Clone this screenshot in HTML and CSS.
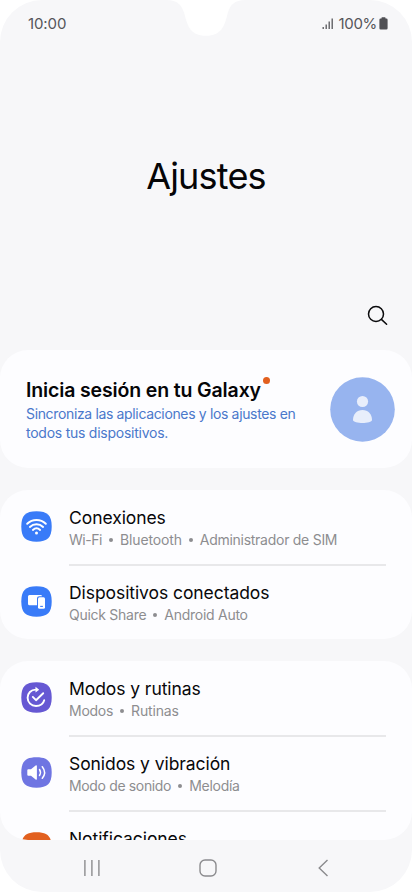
FILE: index.html
```
<!DOCTYPE html>
<html lang="es">
<head>
<meta charset="utf-8">
<meta name="viewport" content="width=device-width, initial-scale=1">
<title>Ajustes</title>
<link rel="stylesheet" href="styles.css">
</head>
<body>
<div class="phone">
  <svg class="notch" width="80" height="37" viewBox="0 0 80 37"><path d="M0 0C12 0 15.500 5 18.500 14C21.500 26 24.500 35.800 40 35.800C55.500 35.800 58.500 26 61.500 14C64 5 68 0 80 0Z" fill="#fff"/></svg>
  <header class="status">
    <span class="time">10:00</span>
    <div class="status-right">
      <svg class="signal" width="12" height="12" viewBox="0 0 12 12" stroke="#55555a" stroke-width="1.300"><path d="M1.200 11V9M4.200 11V6.500M7.200 11V3.500M10.200 11V0.500"/></svg>
      <span class="percent">100%</span>
      <svg class="battery" width="9" height="13" viewBox="0 0 9 13"><path d="M2.500 1.500V.8Q2.500.2 3.100.2H5.900Q6.500.2 6.500.8V1.500H7.300Q8.600 1.500 8.600 2.800V11.200Q8.600 12.500 7.300 12.500H1.700Q.4 12.500.4 11.200V2.800Q.4 1.500 1.700 1.500Z" fill="#505054"/></svg>
    </div>
  </header>
  <h1 class="title">Ajustes</h1>
  <div class="toolbar">
    <svg width="22" height="22" viewBox="0 0 22 22" fill="none" stroke="#0a0a0c" stroke-width="1.500" stroke-linecap="round"><circle cx="9" cy="9" r="7.500"/><path d="M14.400 14.400L19.600 19.300"/></svg>
  </div>
  <main class="list">
    <section class="card account">
      <div class="account-text">
        <h2 class="account-title">Inicia sesión en tu Galaxy<i class="badge"></i></h2>
        <p class="account-sub">Sincroniza las aplicaciones y los ajustes en<br><span class="second-line">todos tus dispositivos.</span></p>
      </div>
      <svg class="avatar" width="65" height="65" viewBox="0 0 65 65"><circle cx="32.500" cy="32.500" r="32.300" fill="#97b4ef"/><g fill="#e8eefb"><circle cx="32.500" cy="24.500" r="5.600"/><path d="M23 43C23 37 27 33 32.500 33S42 37 42 43C42 45 37 46 32.500 46S23 45 23 43Z"/></g></svg>
    </section>
    <section class="card">
      <div class="row">
        <svg class="icon" viewBox="0 0 31 31"><path class="blue" d="M15.500.3C26.500.3 30.700 4.500 30.700 15.500S26.500 30.700 15.500 30.700.3 26.500.3 15.500 4.500.3 15.500.3Z"/><g fill="none" stroke="#fff" stroke-width="2" stroke-linecap="round"><path d="M6.200 12.700C11.500 7.700 19.500 7.700 24.800 12.700M8.900 15.900C12.700 12.400 18.300 12.400 22.100 15.900M11.900 18.900C14 17 17 17 19.100 18.900"/></g><circle cx="15.500" cy="21.900" r="1.500" fill="#fff"/></svg>
        <div class="text"><span class="name">Conexiones</span><p class="sub"><span class="tighter">Wi-Fi</span><i></i><span class="looser">Bluetooth</span><i></i><span>Administrador de SIM</span></p></div>
      </div>
      <div class="row">
        <svg class="icon" viewBox="0 0 31 31"><path class="blue" d="M15.500.3C26.500.3 30.700 4.500 30.700 15.500S26.500 30.700 15.500 30.700.3 26.500.3 15.500 4.500.3 15.500.3Z"/><path d="M8.500 9H19.500Q21 9 21 10.200H18.200Q16 10.200 16 12.200V19.200H8.500Q7 19.200 7 17.700V10.500Q7 9 8.500 9Z" fill="#fff"/><rect x="17" y="11.200" width="7" height="11.500" rx="1.500" fill="#fff"/><path d="M19.200 20.400H21.900" stroke="#397bf8" stroke-width="1.100"/></svg>
        <div class="text"><span class="name">Dispositivos conectados</span><p class="sub"><span>Quick Share</span><i></i><span>Android Auto</span></p></div>
      </div>
    </section>
    <section class="card clipped">
      <div class="row">
        <svg class="icon" viewBox="0 0 31 31"><path class="violet" d="M15.500.3C26.500.3 30.700 4.500 30.700 15.500S26.500 30.700 15.500 30.700.3 26.500.3 15.500 4.500.3 15.500.3Z"/><g fill="none" stroke="#fff" stroke-width="1.900" stroke-linecap="round" stroke-linejoin="round"><path d="M14.600 7.600C10 7.600 6.600 11.200 6.600 15.800S10.300 24 15 24C19 24 22.300 21.600 23.200 18.200M11.800 14.900L15 18.200L22.200 11.200"/></g><path d="M14.500 4.800L18.200 7.700L14.500 10.500Z" fill="#fff"/></svg>
        <div class="text"><span class="name">Modos y rutinas</span><p class="sub"><span>Modos</span><i></i><span class="looser">Rutinas</span></p></div>
      </div>
      <div class="row">
        <svg class="icon" viewBox="0 0 31 31"><path class="indigo" d="M15.500.3C26.500.3 30.700 4.500 30.700 15.500S26.500 30.700 15.500 30.700.3 26.500.3 15.500 4.500.3 15.500.3Z"/><path d="M7.300 12.200H10L14.600 8.500Q15.900 7.700 15.900 9.200V21.800Q15.900 23.300 14.600 22.400L10 18.800H7.300Q6.300 18.800 6.300 17.800V13.200Q6.300 12.200 7.300 12.200Z" fill="#fff"/><path d="M18.500 12.500Q20.500 15.500 18.500 18.500M21.300 9.700Q25.900 15.500 21.300 21.300" fill="none" stroke="#fff" stroke-width="1.500" stroke-linecap="round"/></svg>
        <div class="text"><span class="name">Sonidos y vibración</span><p class="sub"><span class="tight">Modo de sonido</span><i></i><span>Melodía</span></p></div>
      </div>
      <div class="row">
        <svg class="icon" viewBox="0 0 31 31"><path class="orange" d="M15.500.3C26.500.3 30.700 4.500 30.700 15.500S26.500 30.700 15.500 30.700.3 26.500.3 15.500 4.500.3 15.500.3Z"/></svg>
        <div class="text"><span class="name">Notificaciones</span></div>
      </div>
    </section>
  </main>
  <nav class="nav">
    <svg width="18" height="18" viewBox="0 0 18 18" stroke="#8b8b8e" stroke-width="1.400"><path d="M1.900 1V17M8.900 1V17M15.900 1V17"/></svg>
    <svg width="18" height="18" viewBox="0 0 18 18" fill="none" stroke="#8b8b8e" stroke-width="1.400"><rect x="1" y="1" width="16" height="16" rx="5"/></svg>
    <svg width="18" height="18" viewBox="0 0 18 18" fill="none" stroke="#8b8b8e" stroke-width="1.400"><path d="M12.500 1L4.200 9L12.500 17"/></svg>
  </nav>
</div>
</body>
</html>
```
FILE: styles.css
```
* { box-sizing: border-box; }
body { margin: 0; background: #fff; font-family: Inter, "Liberation Sans", sans-serif; }
h1, h2, p { margin: 0; font-weight: 400; }
svg { display: block; flex: none; }

.phone {
  position: relative;
  width: 412px;
  height: 892px;
  overflow: hidden;
  display: flex;
  flex-direction: column;
  background: #f7f7f9;
  border-radius: 42px;
}
.notch { position: absolute; left: 166px; top: 0; }

.status {
  display: flex;
  justify-content: space-between;
  align-items: center;
  height: 47px;
  padding: 0 24px 0 28px;
  font-size: 15px;
  color: #55555a;
}
.status-right { display: flex; align-items: center; }
.percent { margin: 0 2px 0 4px; letter-spacing: -0.3px; }
.time { letter-spacing: -0.1px; }

.title {
  height: 258px;
  padding-top: 107px;
  font-size: 36px;
  line-height: 44px;
  letter-spacing: -0.8px;
  text-align: center;
  color: #050507;
}
.toolbar { display: flex; justify-content: flex-end; height: 45px; padding-right: 23px; }

.list { display: flex; flex-direction: column; gap: 22px; }
.card { background: #fdfdff; border-radius: 28px; }

.account {
  display: flex;
  align-items: center;
  justify-content: space-between;
  height: 118px;
  padding: 0 17px 0 26px;
}
.account-text { white-space: nowrap; }
.account-title {
  position: relative;
  top: 1px;
  width: max-content;
  font-size: 19.500px;
  line-height: 24px;
  font-weight: 600;
  letter-spacing: -0.14px;
  color: #050507;
}
.badge { position: absolute; right: -9px; top: -1px; width: 7px; height: 7px; border-radius: 50%; background: #e2601f; }
.account-sub { margin-top: 3px; font-size: 14px; line-height: 19px; letter-spacing: -0.35px; color: #4a78cb; }
.second-line { letter-spacing: -0.25px; }

.row { position: relative; display: flex; height: 75px; padding: 16px 0 0 21px; }
.row + .row::before { content: ""; position: absolute; left: 69px; right: 26px; top: -1px; height: 1.500px; background: #e8e8ea; }
.row:last-child { height: 74px; }
.icon { width: 31px; height: 31px; margin: 5px 17px 0 0; }
.blue { fill: #397bf8; }
.violet { fill: #6658d3; }
.indigo { fill: #6f75e2; }
.orange { fill: #e2601f; }
.text { white-space: nowrap; }
.name { display: block; width: max-content; font-size: 17.500px; line-height: 24px; letter-spacing: -0.07px; color: #08080a; }
.sub { display: flex; align-items: center; font-size: 14px; line-height: 20px; letter-spacing: -0.27px; color: #8d8d90; }
.tight { letter-spacing: -0.35px; }
.tighter { letter-spacing: -0.45px; }
.looser { letter-spacing: -0.15px; }
.sub i { width: 4px; height: 4px; margin: 0 7px; border-radius: 50%; background: #8d8d90; }

.clipped { height: 179px; overflow: hidden; }

.nav { display: flex; align-items: center; gap: 98px; height: 52px; padding: 4px 0 0 83px; }
```
